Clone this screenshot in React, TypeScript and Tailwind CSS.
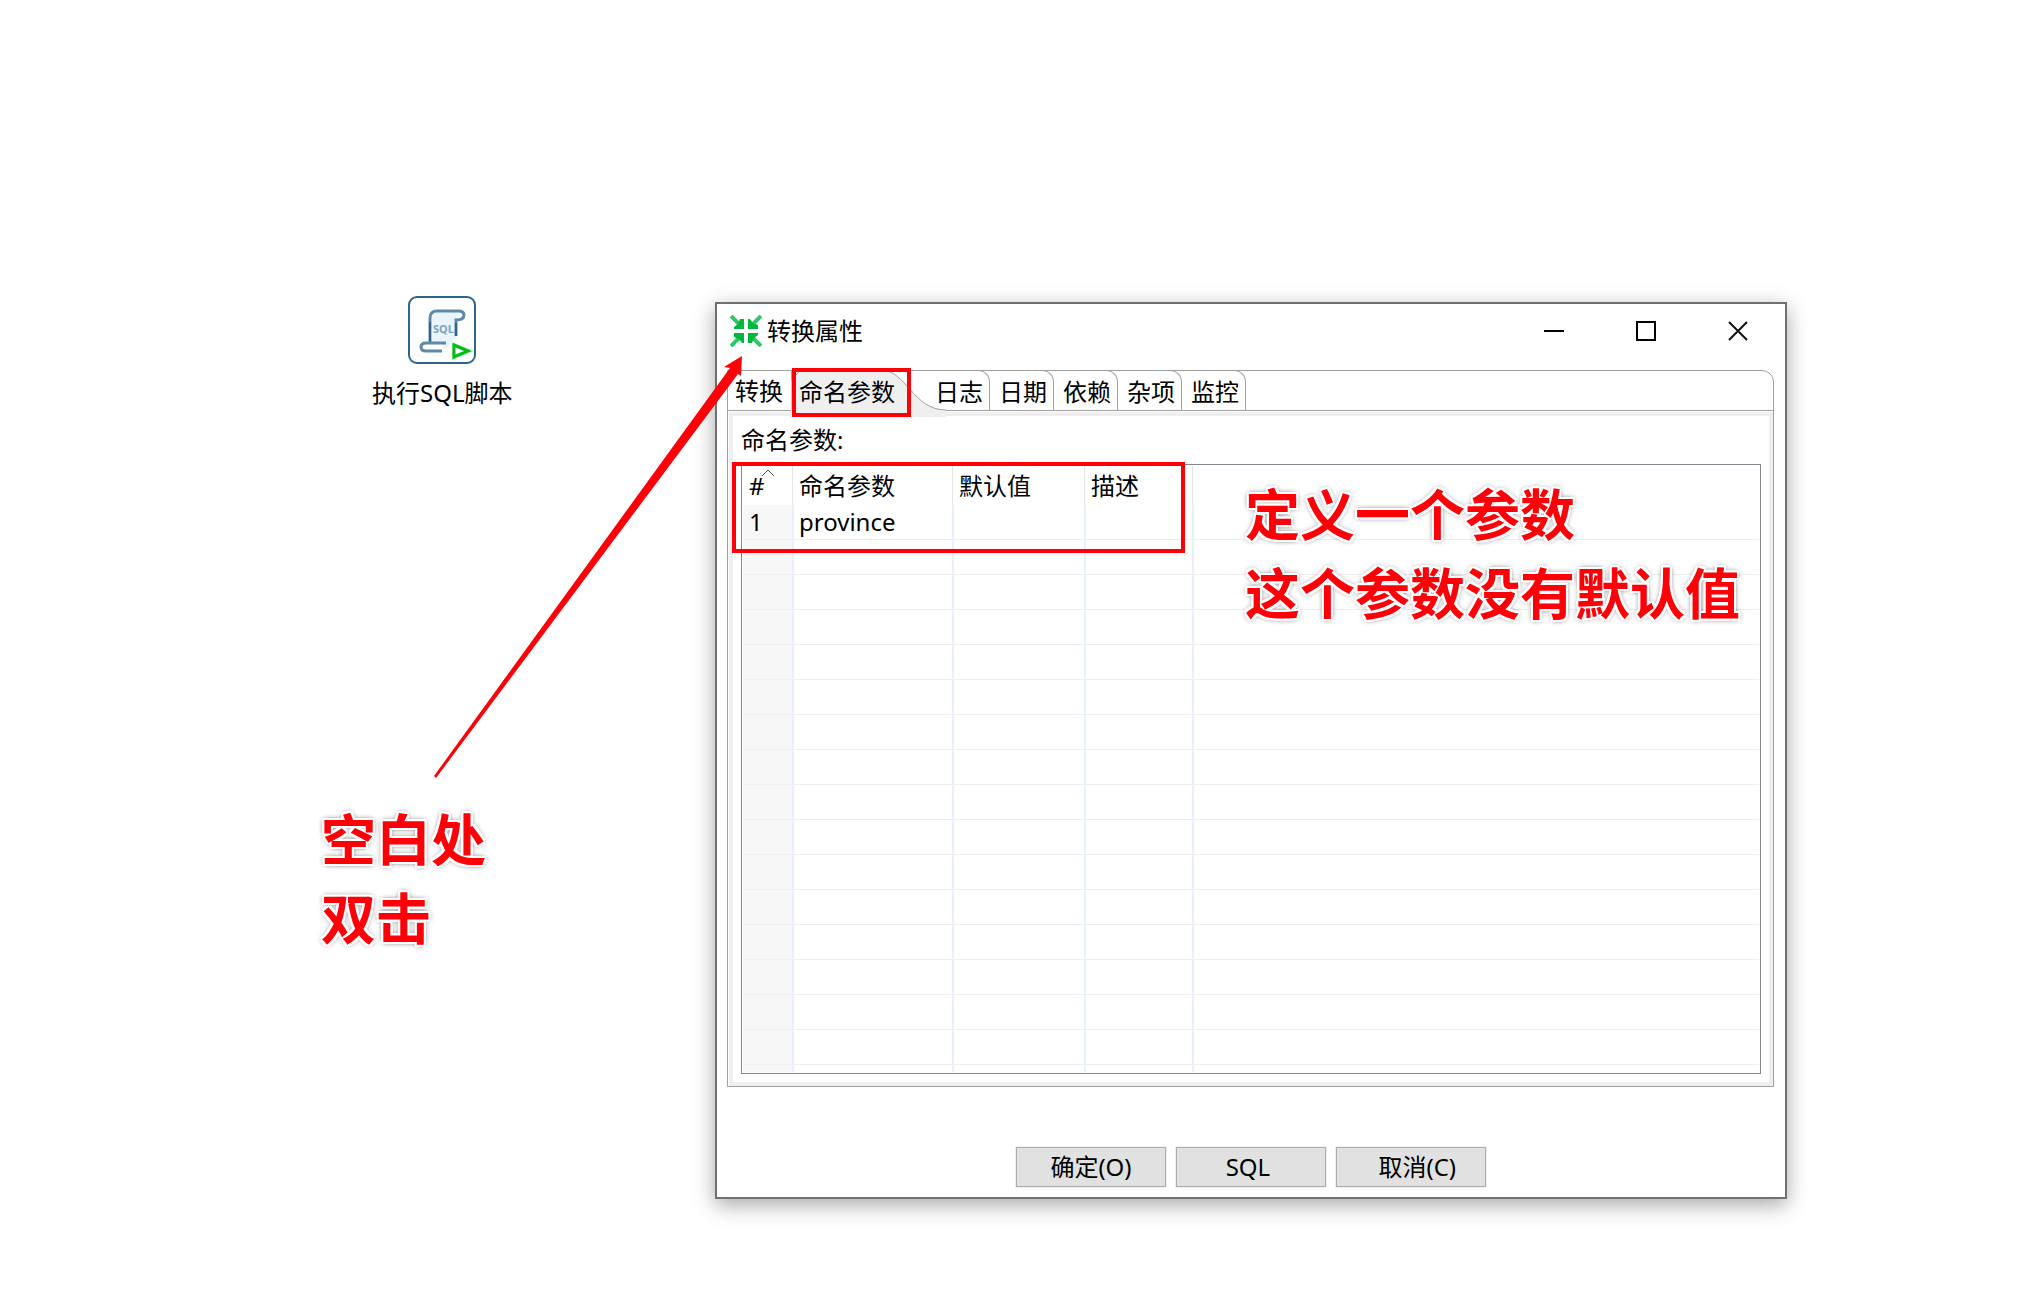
import React, {useState} from "react";

interface TabItem {
    id: string;
    label: string;
}

interface ParamRow {
    name: string;
    value: string;
    description: string;
}

const tabs: TabItem[] = [
    {id: "transform", label: "转换"},
    {id: "params", label: "命名参数"},
    {id: "logging", label: "日志"},
    {id: "dates", label: "日期"},
    {id: "dependencies", label: "依赖"},
    {id: "misc", label: "杂项"},
    {id: "monitoring", label: "监控"},
];

const rows: ParamRow[] = [{name: "province", value: "", description: ""}];
const EMPTY_ROWS = 15;

const captionStyle =
    "absolute font-bold text-[55px] leading-[79px] text-[#ff0008] whitespace-nowrap pointer-events-none " +
    "[text-shadow:2px_0_0_#fff,-2px_0_0_#fff,0_2px_0_#fff,0_-2px_0_#fff,2px_2px_0_#fff,-2px_-2px_0_#fff,2px_-2px_0_#fff,-2px_2px_0_#fff,0_0_5px_#777,0_0_6px_#888]";

const SqlScriptIcon = () => (
    <svg width="68" height="68" viewBox="0 0 68 68" fill="none" aria-hidden="true">
        <rect x="1" y="1" width="66" height="66" rx="8" fill="#fff" stroke="#2f6488" strokeWidth="2"/>
        <path d="M24 18 Q24 15 28 15 H51 Q48 19 48 25 V42 L38 53 H34 Q36 49 32 47 H24 Z" fill="#e9f5fd"/>
        <path d="M22 46 V22 Q22 15 29 15 H52 Q56 16 56 19 Q56 24 48 24 V40" stroke="#6089a8" strokeWidth="3"/>
        <path d="M22 46 V26 M48 27 V40" stroke="#2f6488" strokeWidth="2"/>
        <path d="M38 47 H18 Q13 47 13 51 Q13 55 18 55 H34" stroke="#6089a8" strokeWidth="3"/>
        <text x="25" y="37" fontSize="11" fontWeight="700" fontFamily="Noto Sans, sans-serif" fill="#7fa2bb">SQL</text>
        <path d="M46 49 L61 55 L46 61 Z" fill="#fff" stroke="#b5efb9" strokeWidth="4"/>
        <path d="M46 49 L60 55 L46 61 Z" fill="#fff" stroke="#00bd12" strokeWidth="3"/>
    </svg>
);

const CollapseIcon = () => (
    <svg width="32" height="32" viewBox="0 0 32 32" aria-hidden="true">
        {[0, 90, 180, 270].map((angle) => (
            <g key={angle} transform={`rotate(${angle} 16 16)`}>
                <path d="M1 1 L11 11" stroke="#2fc765" strokeWidth="4"/>
                <path d="M14 14 H4 V12 L8 9 L10 4 H14 Z" fill="#00b83c"/>
            </g>
        ))}
    </svg>
);

const TitleBar = () => (
    <header className="flex h-[54px] items-center mb-3 pl-[13px] pr-px">
        <CollapseIcon/>
        <h1 className="ml-[5px] flex-1 text-2xl leading-8">转换属性</h1>
        <button aria-label="最小化" className="flex h-full w-[92px] items-center justify-center">
            <svg width="20" height="20" aria-hidden="true"><path d="M0 10 H20" stroke="#000" strokeWidth="2"/></svg>
        </button>
        <button aria-label="最大化" className="flex h-full w-[92px] items-center justify-center">
            <svg width="20" height="20" aria-hidden="true">
                <rect x="1" y="1" width="18" height="18" fill="none" stroke="#000" strokeWidth="2"/>
            </svg>
        </button>
        <button aria-label="关闭" className="flex h-full w-[92px] items-center justify-center">
            <svg width="20" height="20" aria-hidden="true">
                <path d="M1 1 L19 19 M19 1 L1 19" stroke="#111" strokeWidth="2"/>
            </svg>
        </button>
    </header>
);

// Selected tab: grey body with the long slope that runs under the next tab
const SelectedTabShape = () => (
    <svg className="absolute -left-px -top-px" width="156" height="47" viewBox="0 0 156 47" aria-hidden="true">
        <path d="M0 47 V11 L11 0 H90 C115 0 122 40 155 40 V47 Z" fill="#efefef"/>
        <path d="M0 40 V11 Q1 8 5 5 Q8 1 11 0 M90 0 C115 0 122 40 155 40" fill="none" stroke="#a0a0a0"/>
    </svg>
);

const TabStrip = ({active, onSelect}: {active: string; onSelect: (id: string) => void}) => (
    <div role="tablist" className="flex h-10 border-b border-[#a0a0a0]">
        {tabs.map((tab, i) => {
            if (tab.id === active) {
                return (
                    <button key={tab.id} role="tab" aria-selected="true"
                            className="relative pl-[7px] pr-[31px] pt-[2px] text-2xl leading-8">
                        <SelectedTabShape/>
                        <span className="relative">{tab.label}</span>
                    </button>
                );
            }
            return (
                <button key={tab.id} role="tab" aria-selected="false" onClick={() => onSelect(tab.id)}
                        className={`relative -mt-px border-r border-[#a0a0a0] pt-[2px] text-2xl leading-8 ${i > 0 ? "rounded-tr-xl border-t pl-[9px] pr-[6px]" : "pl-[7px] pr-2"}`}>
                    {tab.label}
                </button>
            );
        })}
    </div>
);

const ParamTable = () => {
    const headCell = "h-[39px] border-l border-[#e5e5e5] pl-[6px] text-left font-normal";
    const bodyCell = "h-[35px] border-b border-l-2 border-b-[#efefef] border-l-[#e8f0fa] pl-[5px]";
    const numberCell = "h-[35px] border-b border-[#efefef] bg-[#f7f7f7] pl-[6px]";

    return (
        <div className="border border-[#828790] p-px">
            <table aria-labelledby="params-label"
                   className="w-full table-fixed border-separate border-spacing-0 text-2xl leading-8">
                <colgroup>
                    <col className="w-[49px]"/>
                    <col className="w-[160px]"/>
                    <col className="w-[132px]"/>
                    <col className="w-[108px]"/>
                    <col/>
                </colgroup>
                <thead>
                    <tr>
                        <th className="relative h-[39px] pl-[6px] text-left font-normal">
                            #
                            <svg className="absolute left-[18px] top-[3px]" width="14" height="8" aria-hidden="true">
                                <path d="M1 7 L7 1 L13 7" fill="none" stroke="#555"/>
                            </svg>
                        </th>
                        <th className={headCell}>命名参数</th>
                        <th className={headCell}>默认值</th>
                        <th className={headCell}>描述</th>
                        <th className={headCell}/>
                    </tr>
                </thead>
                <tbody>
                    {rows.map((row, i) => (
                        <tr key={row.name}>
                            <td className={numberCell}>{i + 1}</td>
                            <td className={bodyCell}>{row.name}</td>
                            <td className={bodyCell}>{row.value}</td>
                            <td className={bodyCell}>{row.description}</td>
                            <td className={bodyCell}/>
                        </tr>
                    ))}
                    {Array.from({length: EMPTY_ROWS}, (_, i) => (
                        <tr key={i}>
                            <td className={numberCell}/>
                            <td className={bodyCell}/>
                            <td className={bodyCell}/>
                            <td className={bodyCell}/>
                            <td className={bodyCell}/>
                        </tr>
                    ))}
                    <tr>
                        <td className="h-[7px] bg-[#f7f7f7]"/>
                        <td className="border-l-2 border-[#e8f0fa]"/>
                        <td className="border-l-2 border-[#e8f0fa]"/>
                        <td className="border-l-2 border-[#e8f0fa]"/>
                        <td className="border-l-2 border-[#e8f0fa]"/>
                    </tr>
                </tbody>
            </table>
        </div>
    );
};

const DialogButton = ({label}: {label: string}) => (
    <button className="h-10 w-[150px] whitespace-pre border border-[#adadad] bg-[#e1e1e1] text-2xl leading-8 ring-1 ring-[#f0f0f0]">
        {label}
    </button>
);

const PropertiesDialog = () => {
    const [active, setActive] = useState("params");

    return (
        <section className="absolute left-[715px] right-[253px] top-[302px] border-2 border-[#6f7070] bg-white shadow-[0_6px_20px_rgba(0,0,0,0.35)]">
            <TitleBar/>
            <div className="ml-[10px] mr-[11px] rounded-tr-xl border border-[#a0a0a0]">
                <TabStrip active={active} onSelect={setActive}/>
                <div role="tabpanel" className="ml-px mt-px border-4 border-[#efefef] px-2 pb-2">
                    <p id="params-label" className="py-2 text-2xl leading-8">命名参数:</p>
                    <ParamTable/>
                </div>
            </div>
            <footer className="mb-[10px] mt-[60px] flex justify-center gap-[10px]">
                <DialogButton label="确定(O)"/>
                <DialogButton label={"SQL "}/>
                <DialogButton label={"  取消(C)"}/>
            </footer>
        </section>
    );
};

const App = () => {
    return (
        <main className="relative min-h-screen overflow-hidden bg-white font-['Noto_Sans','Noto_Sans_CJK_SC',sans-serif] text-black">
            <figure className="absolute left-[372px] top-[296px] flex flex-col items-center">
                <SqlScriptIcon/>
                <figcaption className="mt-[13px] text-2xl leading-8">执行SQL脚本</figcaption>
            </figure>

            <PropertiesDialog/>

            {/* red markup on top of the desktop */}
            <div className="pointer-events-none absolute left-[792px] top-[368px] h-[49px] w-[119px] border-4 border-[#ff0008]"/>
            <div className="pointer-events-none absolute left-[732px] top-[462px] h-[91px] w-[453px] border-4 border-[#ff0008]"/>
            <svg className="pointer-events-none absolute left-[430px] top-[350px]" width="320" height="432" aria-hidden="true">
                <path d="M312 6 L311 26 L308 24 L6 428 L4 426 L300 18 L294 17 Z" fill="#ff0008"/>
            </svg>
            <p className={`${captionStyle} left-[321px] top-[799px]`}>空白处<br/>双击</p>
            <p className={`${captionStyle} left-[1245px] top-[474px]`}>定义一个参数<br/>这个参数没有默认值</p>
        </main>
    );
};

export default App;
